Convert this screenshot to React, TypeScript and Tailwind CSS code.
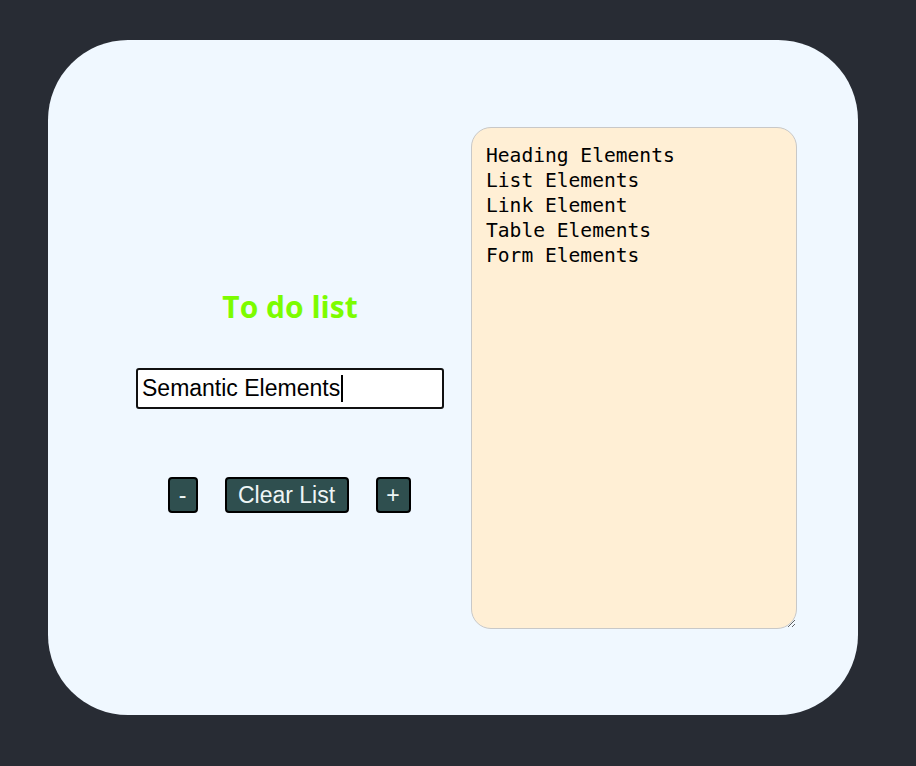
import React from "react";

const items = [
  "Heading Elements",
  "List Elements",
  "Link Element",
  "Table Elements",
  "Form Elements",
];

export default function App() {
  return (
    <div className="flex min-h-[766px] w-full items-start bg-[#282c34] px-[48px] pt-[40px]">
      <div className="flex h-[675px] w-[810px] rounded-[80px] bg-[#f0f8ff] pl-[82px] pt-[87px]">
        <div className="flex w-[320px] flex-col items-center pt-[160px]">
          <h1 className="h-[40px] text-[30px] font-bold leading-[40px] text-[#7cfc00] [font-family:'Open_Sans',sans-serif]">
            To do list
          </h1>
          <div className="mt-[41px] flex h-[41px] w-[308px] items-center rounded-[3px] border-2 border-[#111] bg-white px-[4px] text-[23px] text-black [font-family:'Liberation_Sans',Arial,sans-serif]">
            <span>Semantic Elements</span>
            <span className="ml-[1px] inline-block h-[27px] w-[2px] bg-black" />
          </div>
          <div className="mt-[68px] flex items-center gap-[27px] pr-[2px] [font-family:'Liberation_Sans',Arial,sans-serif]">
            <button className="flex h-[36px] w-[30px] items-center justify-center rounded-[4px] border-2 border-black bg-[#2f4f4f] text-[23px] text-[#eef6f6]">
              -
            </button>
            <button className="flex h-[36px] w-[124px] items-center justify-center rounded-[4px] border-2 border-black bg-[#2f4f4f] text-[23px] text-[#eef6f6]">
              Clear List
            </button>
            <button className="flex h-[36px] w-[35px] items-center justify-center rounded-[4px] border-2 border-black bg-[#2f4f4f] text-[23px] text-[#eef6f6]">
              +
            </button>
          </div>
        </div>
        <textarea
          readOnly
          value={items.join("\n")}
          className="ml-[21px] h-[502px] w-[326px] rounded-[20px] border border-[#c8c8c8] bg-[#ffefd5] px-[14px] pt-[15px] text-[19.6px] leading-[25px] text-black outline-none [font-family:'DejaVu_Sans_Mono',monospace]"
        />
      </div>
    </div>
  );
}
